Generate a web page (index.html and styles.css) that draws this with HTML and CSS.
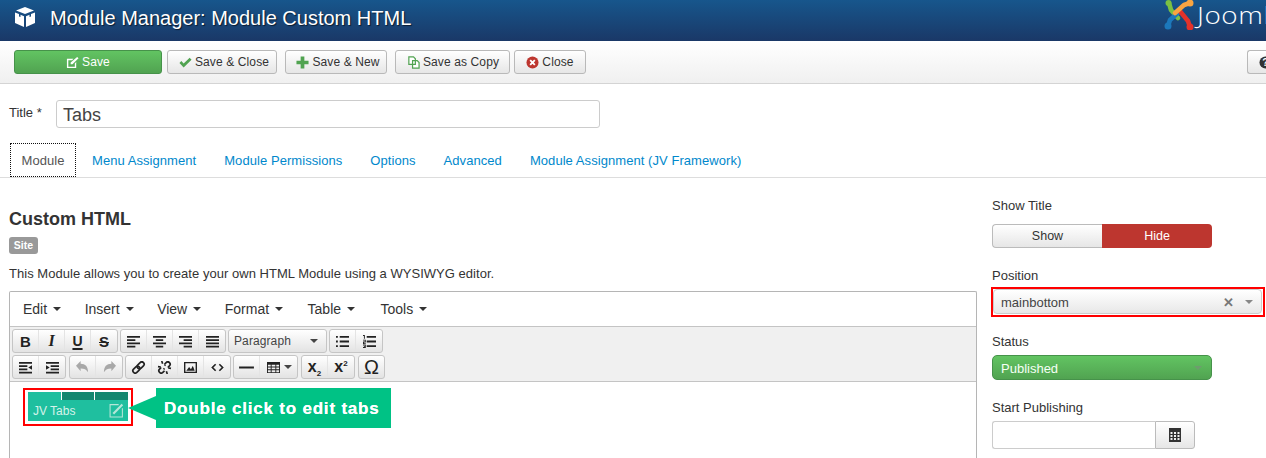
FILE: index.html
```html
<!DOCTYPE html>
<html lang="en">
<head>
<meta charset="utf-8">
<title>Module Manager: Module Custom HTML</title>
<link rel="stylesheet" href="styles.css">
</head>
<body>
<header class="topbar">
  <svg class="cube" viewBox="0 0 20 20" width="20" height="20"><path fill="#fff" d="M10 0l9 3.500-9 3.500-9-3.500zM0 5.500l4 1.600v2.400l1.500.6V7.700L9 9.300V20l-9-4zM20 5.500l-4 1.600v2.400l-1.500.6V7.700L11 9.300V20l9-4z"/></svg>
  <h1 class="page-title">Module Manager: Module Custom HTML</h1>
  <div class="brand">
    <svg class="brand-mark" viewBox="0 0 30 30" width="30" height="30" fill="none" stroke-width="4.600" stroke-linecap="round" stroke-linejoin="round">
      <g stroke="#7ac143" fill="#7ac143"><circle cx="4.500" cy="3" r="3" stroke="none"/><path fill="none" d="M5 3l2 7 7 8"/></g>
      <g stroke="#1c78bb" fill="#1c78bb"><circle cx="4" cy="26" r="3.500" stroke="none"/><path fill="none" d="M4 26l2-6 10-9"/></g>
      <g stroke="#e4322b" fill="#e4322b"><circle cx="26" cy="27" r="3.500" stroke="none"/><path fill="none" d="M26 27l-2-6-9-11"/></g>
      <g stroke="#f9a541" fill="#f9a541"><circle cx="26" cy="3" r="3.500" stroke="none"/><path fill="none" d="M26 3l-6 2-9 8"/></g>
    </svg>
    <span class="brand-name">Joomla!</span>
  </div>
</header>

<nav class="actions">
  <button class="btn btn-save"><svg class="ico" viewBox="0 0 14 14"><path fill="#fff" d="M1 3h7L6.500 4.500H2.500v7h7V8L11 6.500V13H1zM12 1l1.500 1.500L7 9H5V7z"/></svg>Save</button>
  <button class="btn w-close gap-s"><svg class="ico" viewBox="0 0 14 14"><path fill="#51a351" d="M0.500 7.500l2-2 2.500 2.500L11.500 2l2 2-8.500 8.500z"/></svg>Save &amp; Close</button>
  <button class="btn w-new gap-m"><svg class="ico" viewBox="0 0 14 14"><path fill="#51a351" d="M5 0.500h4v4.500h4.500v4H9v4.500H5V9H0.500V5H5z"/></svg>Save &amp; New</button>
  <button class="btn w-copy gap-m"><svg class="ico" viewBox="0 0 14 14" fill="#fff" stroke="#51a351" stroke-width="1.300"><path d="M2 1h5l2 2v6H2zM6 5h5l2 2v6H6z"/></svg>Save as Copy</button>
  <button class="btn w-x"><svg class="ico" viewBox="0 0 14 14"><circle cx="7" cy="7" r="6.500" fill="#bd362f"/><path stroke="#fff" stroke-width="2" d="M4.500 4.500l5 5M9.500 4.500l-5 5"/></svg>Close</button>
  <button class="btn btn-help"><svg class="ico" viewBox="0 0 14 14"><circle cx="7" cy="7" r="6.500" fill="#333"/><text x="7" y="11" text-anchor="middle" class="help-mark">?</text></svg></button>
</nav>

<section class="title-row">
  <label class="title-label">Title *</label>
  <div class="title-input">Tabs</div>
</section>

<ul class="tabs">
  <li class="tab tab-active">Module</li>
  <li class="tab">Menu Assignment</li>
  <li class="tab">Module Permissions</li>
  <li class="tab">Options</li>
  <li class="tab">Advanced</li>
  <li class="tab">Module Assignment (JV Framework)</li>
</ul>

<main class="columns">
  <section class="left">
    <h2 class="mod-name">Custom HTML</h2>
    <span class="badge">Site</span>
    <p class="desc">This Module allows you to create your own HTML Module using a WYSIWYG editor.</p>
    <div class="editor">
      <div class="menubar">
        <span class="menu">Edit<i class="caret"></i></span>
        <span class="menu">Insert<i class="caret"></i></span>
        <span class="menu">View<i class="caret"></i></span>
        <span class="menu">Format<i class="caret"></i></span>
        <span class="menu menu-table">Table<i class="caret"></i></span>
        <span class="menu">Tools<i class="caret"></i></span>
      </div>
      <div class="tinybar">
        <div class="tinyrow">
          <div class="grp">
            <span class="tb tb-b">B</span><span class="tb tb-i">I</span><span class="tb tb-u">U</span><span class="tb tb-s">S</span>
          </div>
          <div class="grp">
            <span class="tb"><svg class="ti" viewBox="0 0 16 14"><path d="M1 1h14v2H1zM1 4.500h9v2H1zM1 8h14v2H1zM1 11.500h9v2H1z"/></svg></span>
            <span class="tb"><svg class="ti" viewBox="0 0 16 14"><path d="M1 1h14v2H1zM4 4.500h8v2H4zM1 8h14v2H1zM4 11.500h8v2H4z"/></svg></span>
            <span class="tb"><svg class="ti" viewBox="0 0 16 14"><path d="M1 1h14v2H1zM6 4.500h9v2H6zM1 8h14v2H1zM6 11.500h9v2H6z"/></svg></span>
            <span class="tb"><svg class="ti" viewBox="0 0 16 14"><path d="M1 1h14v2H1zM1 4.500h14v2H1zM1 8h14v2H1zM1 11.500h14v2H1z"/></svg></span>
          </div>
          <div class="grp grp-format"><span class="fmt">Paragraph</span><i class="caret caret-dark"></i></div>
          <div class="grp">
            <span class="tb"><svg class="ti" viewBox="0 0 16 14"><path d="M1 1h2v2H1zM5 1h10v2H5zM1 6h2v2H1zM5 6h10v2H5zM1 11h2v2H1zM5 11h10v2H5z"/></svg></span>
            <span class="tb"><svg class="ti" viewBox="0 0 16 14"><path d="M1 0h2v4H2V1H1zM5 1h10v2H5zM1 5h3v3H2v1h2v1H1V7h2V6H1zM5 6h10v2H5zM1 10.500h3v3.500H1v-1h2v-.4H2v-.8h1v-.4H1zM5 11h10v2H5z"/></svg></span>
          </div>
        </div>
        <div class="tinyrow">
          <div class="grp grp-gap">
            <span class="tb"><svg class="ti" viewBox="0 0 16 14"><path d="M1 1h14v2H1zM1 4.500h9v2H1zM1 8h9v2H1zM1 11.500h14v2H1zM15 4.500v5l-4-2.500z"/></svg></span>
            <span class="tb"><svg class="ti" viewBox="0 0 16 14"><path d="M1 1h14v2H1zM6 4.500h9v2H6zM6 8h9v2H6zM1 11.500h14v2H1zM1 4.500v5l4-2.500z"/></svg></span>
          </div>
          <div class="grp">
            <span class="tb tb-off"><svg class="ti" viewBox="0 0 16 14"><path d="M1 5l5-5v3c5 0 8 3 8 9-2-3-4-4-8-4v3z"/></svg></span>
            <span class="tb tb-off"><svg class="ti" viewBox="0 0 16 14"><path d="M15 5l-5-5v3c-5 0-8 3-8 9 2-3 4-4 8-4v3z"/></svg></span>
          </div>
          <div class="grp">
            <span class="tb"><svg class="ti ti-line" viewBox="0 0 16 14"><g transform="rotate(-45 8 7)"><rect x="0.500" y="4.500" width="8.500" height="5" rx="2.500"/><rect x="7" y="4.500" width="8.500" height="5" rx="2.500"/></g></svg></span>
            <span class="tb"><svg class="ti ti-line" viewBox="0 0 16 14"><g transform="rotate(-45 8 7)"><path d="M5.500 4.500H3a2.500 2.500 0 0 0 0 5h2.500M10.500 4.500H13a2.500 2.500 0 0 1 0 5h-2.500"/></g><path d="M5 0l1 3M11 14l-1-3M1 6l3 0.500M15 8l-3-0.500M8 5l1-1M7 9l1-1"/></svg></span>
            <span class="tb"><svg class="ti" viewBox="0 0 16 14"><path fill-rule="evenodd" d="M1 1h14v12H1zM2.500 2.500v9h11v-9zM3.500 10.500l3-4 2 2.500 2-4 2 5.500z"/></svg></span>
            <span class="tb"><svg class="ti ti-line" viewBox="0 0 16 14"><path d="M6 3.500L2.500 7 6 10.500M10 3.500L13.500 7 10 10.500"/></svg></span>
          </div>
          <div class="grp grp-gap">
            <span class="tb tb-hr"><svg class="ti" viewBox="0 0 16 14"><path d="M0 6h16v2H0z"/></svg></span>
            <span class="tb tb-wide"><svg class="ti" viewBox="0 0 16 14"><path fill-rule="evenodd" d="M1 1h14v12H1zM2 4v2h3V4zM6 4v2h4V4zM11 4v2h3V4zM2 7v2h3V7zM6 7v2h4V7zM11 7v2h3V7zM2 10v2h3v-2zM6 10v2h4v-2zM11 10v2h3v-2z"/></svg><i class="caret caret-dark caret-near"></i></span>
          </div>
          <div class="grp grp-gap">
            <span class="tb tb-script"><span>x<sub class="scr">2</sub></span></span><span class="tb tb-script"><span>x<sup class="scr">2</sup></span></span>
          </div>
          <div class="grp"><span class="tb tb-omega">Ω</span></div>
        </div>
      </div>
      <div class="edit-area">
        <div class="hilite">
          <div class="jv">
            <div class="jv-tabs"><span class="jv-t jv-t1"></span><span class="jv-t"></span><span class="jv-t"></span></div>
            <div class="jv-body">
              <span class="jv-name">JV Tabs</span>
              <svg class="jv-edit" viewBox="0 0 14 14" fill="none" stroke="#b5e6d8" stroke-width="1"><path d="M9 1.500H1v11.500h11.500V5"/><path stroke-width="2" d="M4 10l8.500-8.500"/></svg>
            </div>
          </div>
        </div>
        <div class="callout">Double click to edit tabs</div>
      </div>
    </div>
  </section>

  <aside class="right">
    <label class="field-label lab-show">Show Title</label>
    <div class="toggle"><span class="tg tg-show">Show</span><span class="tg tg-hide">Hide</span></div>
    <label class="field-label lab-pos">Position</label>
    <div class="pos-hilite">
      <div class="chosen">mainbottom<span class="x">✕</span><i class="tri"></i></div>
    </div>
    <label class="field-label lab-status">Status</label>
    <div class="status">Published<i class="tri tri-status"></i></div>
    <label class="field-label lab-start">Start Publishing</label>
    <div class="date">
      <div class="date-input"></div>
      <div class="date-btn"><svg viewBox="0 0 14 14" width="14" height="14"><path fill="#333" fill-rule="evenodd" d="M1 0h12v14H1zM2.500 4v2h2V4zM6 4v2h2V4zM9.500 4v2h2V4zM2.500 7v2h2V7zM6 7v2h2V7zM9.500 7v2h2V7zM2.500 10v2h2v-2zM6 10v2h2v-2zM9.500 10v2h2v-2z"/></svg></div>
    </div>
  </aside>
</main>
</body>
</html>
```
FILE: styles.css
```css
* { box-sizing: border-box; }
html, body { margin: 0; padding: 0; }
body {
  width: 1266px; height: 458px; overflow: hidden; background: #fff;
  font-family: "Liberation Sans", Arial, sans-serif; font-size: 13px; color: #333;
}
.topbar {
  height: 41px; display: flex; align-items: center; overflow: hidden;
  background: linear-gradient(#17568c, #1a3867); padding-left: 15px;
}
.cube { flex: none; margin-bottom: 7px; }
.page-title {
  margin: 0 0 5px 15px; font-size: 20px; font-weight: 400; color: #fff; line-height: 36px;
  text-shadow: 1px 1px 1px rgba(0,0,0,.6); flex: none; width: 400px; white-space: nowrap;
}
.brand { margin-left: auto; flex: none; width: 102px; height: 41px; display: flex; overflow: hidden; }
.brand-mark { flex: none; }
.brand-name {
  flex: none; margin: -3px 0 0 3px; font-family: "Open Sans", sans-serif; font-weight: 300;
  font-size: 24px; letter-spacing: .5px; line-height: 36px; color: #fff;
  transform: scaleX(1.160); transform-origin: left center;
}
.actions {
  height: 43px; display: flex; align-items: center; padding-left: 14px; overflow: hidden;
  background: linear-gradient(#fff, #f0f0f0); border-bottom: 1px solid #d4d4d4;
}
.btn {
  height: 24px; padding: 0; display: flex; align-items: center; justify-content: center; flex: none;
  font-family: inherit; font-size: 12px; letter-spacing: .12px; color: #333;
  background: linear-gradient(#fff, #e6e6e6); border: 1px solid #b9b9b9; border-radius: 3px;
}
.ico { width: 13px; height: 13px; margin-right: 3px; flex: none; }
.btn-save {
  width: 148px; color: #fff; background: linear-gradient(#62c462, #51a351);
  border-color: #46924a;
}
.gap-s { margin-left: 5px; }
.gap-m { margin-left: 8px; }
.w-close { width: 110px; padding-left: 4px; }
.w-new { width: 102px; padding-left: 4px; }
.w-copy { width: 115px; padding-left: 1px; }
.w-x { width: 72px; margin-left: 4px; }
.btn-help { width: 19px; margin-left: auto; border-right: 0; border-radius: 3px 0 0 3px; justify-content: flex-start; padding-left: 11px; }
.help-mark { font-size: 11px; font-weight: 700; fill: #fff; }
.title-row { display: flex; padding: 16px 0 0 9px; height: 58px; }
.title-label { width: 47px; padding-top: 5px; font-size: 13px; }
.title-input {
  width: 544px; height: 28px; border: 1px solid #ccc; border-radius: 3px;
  padding-left: 6px; font-size: 18px; line-height: 28px; color: #444;
}
.tabs {
  list-style: none; margin: 0; padding: 0 0 0 10px; height: 36px; display: flex; border-bottom: 1px solid #ddd;
}
.tab { padding: 0 14px; height: 35px; line-height: 38px; font-size: 13px; letter-spacing: .06px; color: #08c; white-space: nowrap; }
.tab-active { width: 66px; padding: 0; text-align: center; margin-top: 1px; height: 34px; line-height: 34px; color: #555; border: 1px dotted #111; margin-right: 2px; }
.columns { display: flex; padding-left: 9px; }
.left { width: 968px; flex: none; }
.mod-name { margin: 31px 0 0; font-size: 18px; line-height: 20px; font-weight: 700; color: #333; }
.badge {
  display: block; width: 29px; height: 17px; margin-top: 8px; border-radius: 3px; background: #999;
  color: #fff; font-size: 10.500px; font-weight: 700; line-height: 17px; text-align: center;
}
.desc { margin: 12px 0 0; font-size: 13px; letter-spacing: .03px; line-height: 16px; height: 25px; }
.editor { border: 1px solid #b5b5b5; border-bottom: 0; border-radius: 2px 2px 0 0; height: 167px; overflow: hidden; }
.menubar { height: 35px; display: flex; padding-left: 13px; align-items: center; border-bottom: 1px solid #c4c4c4; font-size: 14px; color: #333; }
.menu { display: flex; align-items: center; margin-right: 23.500px; }
.menu-table { margin-left: 1px; margin-right: 25.500px; }
.caret { width: 0; height: 0; border: 4px solid transparent; border-top-color: #333; border-bottom: 0; margin-left: 6px; }
.tinybar { height: 55px; padding: 2px 0 0 2px; background: #f0f0f0; border-bottom: 1px solid #c4c4c4; }
.tinyrow { display: flex; height: 24px; margin-bottom: 2px; }
.grp {
  display: flex; margin-right: 2px; height: 24px; border: 1px solid #c5c5c5; border-radius: 3px;
  background: linear-gradient(#fff, #e3e3e3);
}
.grp-gap { margin-right: 3px; }
.tb { width: 26px; flex: none; display: flex; align-items: center; justify-content: center; font-size: 14px; color: #222; border-right: 1px solid #e4e4e4; }
.tb:last-child { border-right: 0; }
.tb-wide { width: 37px; }
.ti { width: 15px; height: 13px; fill: #222; }
.ti-line { fill: none; stroke: #222; stroke-width: 1.800; }
.tb-b { font-weight: 700; font-size: 15px; }
.tb-i { font-family: "Liberation Serif", serif; font-style: italic; font-weight: 700; font-size: 16px; }
.tb-u { text-decoration: underline; text-underline-offset: 2px; text-decoration-thickness: 2px; font-size: 14px; font-weight: 700; }
.tb-s { text-decoration: line-through; font-size: 15px; font-weight: 700; }
.tb-off .ti { fill: #a8a8a8; }
.tb-script { font-size: 16px; font-weight: 700; }
.scr { font-size: 8px; line-height: 0; }
.tb-omega { font-size: 20px; width: 25px; }
.grp-format { width: 99px; align-items: center; padding-left: 5px; justify-content: space-between; padding-right: 8px; }
.fmt { font-size: 12px; color: #444; letter-spacing: .1px; }
.caret-dark { border-top-color: #444; margin: 0; }
.caret-near { margin-left: 3px; }
.edit-area { display: flex; padding: 6px 0 0 13px; position: relative; background: #fff; }
.hilite { width: 110px; height: 38px; border: 2px solid #f00; padding: 2px 3px; flex: none; }
.jv { width: 100px; height: 29px; background: #1fbf9f; }
.jv-tabs { display: flex; height: 8px; }
.jv-t { flex: 1; background: #14876f; border-left: 1px solid #fff; }
.jv-t1 { background: transparent; border: 0; }
.jv-body { display: flex; justify-content: space-between; padding: 3px 4px 0 5px; height: 21px; }
.jv-name { color: #d6f3ea; font-size: 12px; line-height: 17px; }
.jv-edit { width: 15px; height: 15px; flex: none; }
.callout {
  margin-left: 23px; width: 235px; height: 40px; padding-left: 8px; background: #00c285; color: #fff;
  font-size: 17px; font-weight: 700; line-height: 41px; letter-spacing: .8px; position: relative; white-space: nowrap;
  text-shadow: 0 0 .6px #fff;
}
.callout::before {
  content: ""; position: absolute; left: -28px; top: 8px; width: 0; height: 0;
  border-style: solid; border-width: 12.500px 28px 12.500px 0; border-color: transparent #00c285 transparent transparent;
}
.right { width: 275px; flex: none; margin-left: 15px; }
.field-label { display: block; font-size: 13px; line-height: 15px; height: 16px; padding-top: 1px; }
.lab-show { margin-top: 19px; }
.lab-pos { margin-top: 19px; }
.lab-status { margin-top: 16px; }
.lab-start { margin-top: 19px; }
.toggle { display: flex; width: 220px; height: 24px; margin-top: 11px; }
.tg { width: 110px; text-align: center; line-height: 25px; font-size: 12.500px; }
.tg-show { border: 1px solid #bbb; border-right: 0; border-radius: 4px 0 0 4px; background: linear-gradient(#fff, #e6e6e6); line-height: 23px; }
.tg-hide { background: #bd362f; color: #fff; border-radius: 0 4px 4px 0; }
.pos-hilite { width: 274px; height: 30px; margin-left: -1px; border: 2px solid #f00; padding: 0 1px 1px 0; margin-top: 4px; }
.chosen {
  height: 25px; border: 1px solid #ccc; border-radius: 4px; padding: 1px 0 0 7px; display: flex; align-items: center;
  background: linear-gradient(#fff, #e8e8e8); font-size: 13px; color: #444;
}
.x { margin-left: auto; font-size: 13px; font-weight: 700; color: #777; }
.tri { width: 0; height: 0; border: 4px solid transparent; border-top-color: #888; border-bottom: 0; margin: 0 8px 0 11px; }
.status {
  width: 220px; height: 25px; margin-top: 6px; padding: 1px 0 0 8px; display: flex; align-items: center; justify-content: space-between;
  border-radius: 5px; border: 1px solid #46924a; background: linear-gradient(#62c462, #51a351); color: #f5fff5; font-size: 13px;
}
.tri-status { border-top-color: #6e9c6e; margin-right: 9px; }
.date { display: flex; width: 203px; height: 28px; margin-top: 6px; }
.date-input { width: 163px; border: 1px solid #ccc; border-radius: 3px 0 0 3px; border-right: 0; }
.date-btn { width: 40px; border: 1px solid #bbb; border-radius: 0 3px 3px 0; background: linear-gradient(#fff, #e6e6e6); display: flex; align-items: center; justify-content: center; }
```
